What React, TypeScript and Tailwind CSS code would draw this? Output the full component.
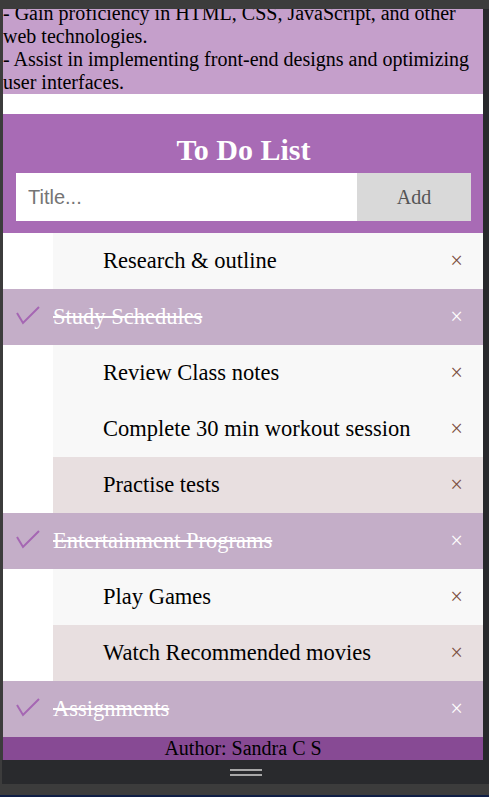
import React from 'react';

type Row = { text: string; heading?: boolean; shade?: boolean };

const rows: Row[] = [
  { text: 'Research & outline' },
  { text: 'Study Schedules', heading: true },
  { text: 'Review Class notes' },
  { text: 'Complete 30 min workout session' },
  { text: 'Practise tests', shade: true },
  { text: 'Entertainment Programs', heading: true },
  { text: 'Play Games' },
  { text: 'Watch Recommended movies', shade: true },
  { text: 'Assignments', heading: true },
];

function Check() {
  return (
    <svg width="50" height="56" viewBox="0 0 50 56" className="shrink-0">
      <polyline points="14,24 20,34 36,18" fill="none" stroke="#a566b3" strokeWidth="2" />
    </svg>
  );
}

function TodoRow({ row }: { row: Row }) {
  if (row.heading) {
    return (
      <li className="flex h-[56px] items-center bg-[#c4aec8] text-white">
        <Check />
        <span className="line-through decoration-white">{row.text}</span>
        <span className="ml-auto px-[20px]">×</span>
      </li>
    );
  }
  return (
    <li className="flex h-[56px] bg-white">
      <div className="w-[50px] shrink-0" />
      <div className={`flex flex-1 items-center pl-[50px] ${row.shade ? 'bg-[#e8dfe0]' : 'bg-[#f8f8f8]'}`}>
        <span className="text-black">{row.text}</span>
        <span className="ml-auto px-[20px] text-[#7d4f3f]">×</span>
      </div>
    </li>
  );
}

export default function App() {
  return (
    <div className="flex h-[797px] w-[489px] flex-col overflow-hidden bg-[#3c3c3c] font-['Liberation_Serif',serif]">
      <div className="h-[9px] shrink-0" />
      <div className="flex h-[751px] shrink-0">
        <div className="w-[3px] shrink-0" />
        {/* viewport */}
        <div className="h-[751px] w-[480px] shrink-0 overflow-hidden bg-white">
          <div className="-mt-[7px]">
            <p className="bg-[#c59fcb] text-[20px] leading-[23px] text-black">
              - Gain proficiency in HTML, CSS, JavaScript, and other web technologies.
              <br />
              - Assist in implementing front-end designs and optimizing user interfaces.
            </p>
            <div className="h-[20px]" />

            {/* Header */}
            <div className="bg-[#a86bb5] pl-[13px] pr-[12px] pt-[18px] pb-[12px]">
              <h2 className="mb-[5px] text-center text-[30px] font-bold leading-[36px] text-white">To Do List</h2>
              <div className="flex h-[48px]">
                <input
                  placeholder="Title..."
                  className="h-full w-[341px] bg-white pl-[12px] font-['Liberation_Sans',sans-serif] text-[20px] text-black outline-none placeholder:text-[#757575]"
                />
                <button className="flex-1 bg-[#d9d9d9] text-[20px] text-[#555]">Add</button>
              </div>
            </div>

            <ul className="text-[22.5px] leading-[26px]">
              {rows.map((r) => (
                <TodoRow key={r.text} row={r} />
              ))}
            </ul>

            <footer className="bg-[#874a94] text-center text-[20px] leading-[23px] text-black">Author: Sandra C S</footer>
          </div>
        </div>
        <div className="w-[6px] shrink-0 bg-[#28292c]" />
      </div>
      {/* device toolbar */}
      <div className="ml-[2px] flex h-[24px] shrink-0 flex-col items-center justify-center gap-[3px] bg-[#292a2d]">
        <div className="h-[2px] w-[32px] bg-[#a8a8a8]" />
        <div className="h-[2px] w-[32px] bg-[#a8a8a8]" />
      </div>
      <div className="h-[11px] shrink-0" />
      <div className="h-[2px] shrink-0 bg-[#0f1e45]" />
    </div>
  );
}
